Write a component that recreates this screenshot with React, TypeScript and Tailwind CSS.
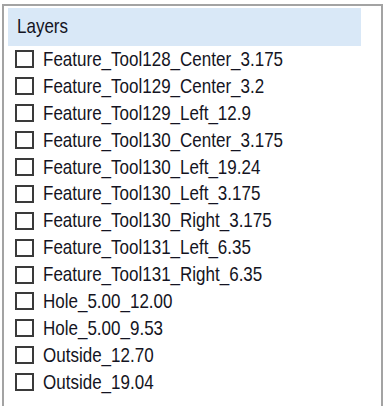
const layers = [
  "Feature_Tool128_Center_3.175",
  "Feature_Tool129_Center_3.2",
  "Feature_Tool129_Left_12.9",
  "Feature_Tool130_Center_3.175",
  "Feature_Tool130_Left_19.24",
  "Feature_Tool130_Left_3.175",
  "Feature_Tool130_Right_3.175",
  "Feature_Tool131_Left_6.35",
  "Feature_Tool131_Right_6.35",
  "Hole_5.00_12.00",
  "Hole_5.00_9.53",
  "Outside_12.70",
  "Outside_19.04",
];

function LayerRow({ name }: { name: string }) {
  return (
    <li className="flex items-center h-[26.9px]">
      <span className="ml-[7px] w-[19px] h-[18px] border-2 border-[#3a3a3a] bg-white shrink-0" />
      <span className="ml-[9px] inline-block scale-y-115 text-[17px] leading-none text-[#141422] whitespace-nowrap">
        {name}
      </span>
    </li>
  );
}

export default function App() {
  return (
    <div className="h-[406px] overflow-hidden bg-white pt-[4px] pl-[2px] pr-[3px] font-['Liberation_Sans',Arial,sans-serif]">
      <div className="h-[420px] border-2 border-[#a3a3a3] bg-white pt-[2px] pl-[4px]">
        <div className="w-[353px] h-[38px] bg-[#d9e8f7] flex items-center pl-[9px]">
          <span className="inline-block scale-y-115 text-[17px] text-[#141422]">Layers</span>
        </div>
        <ul>
          {layers.map((l) => (
            <LayerRow key={l} name={l} />
          ))}
        </ul>
      </div>
    </div>
  );
}
